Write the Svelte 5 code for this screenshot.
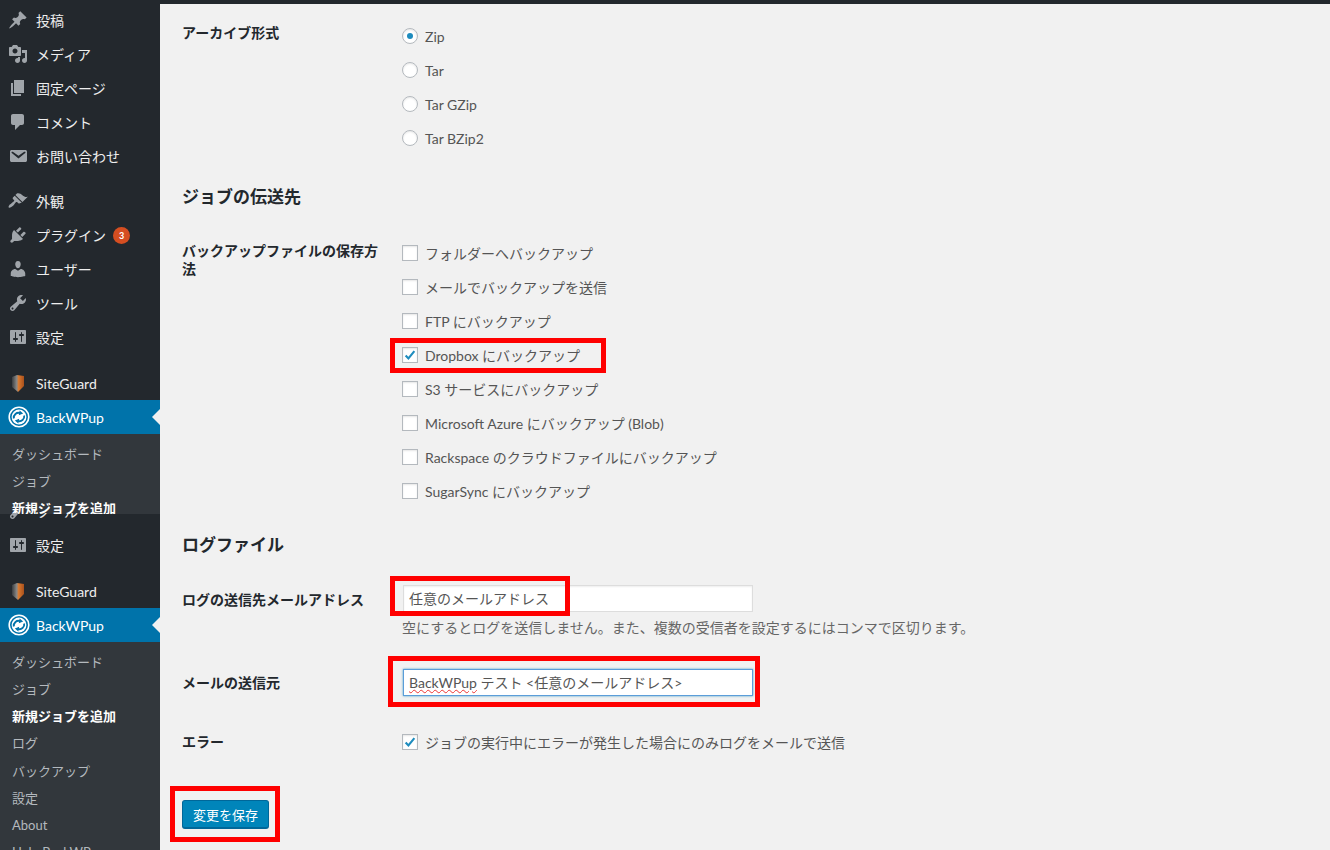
<script>
  const icons = {
    post: "M10.44 3.02l1.82-1.82 6.36 6.35-1.83 1.82c-1.05-.68-2.48-.57-3.41.36l-.75.75c-.92.93-1.04 2.35-.35 3.41l-1.83 1.82-2.41-2.41-2.8 2.79c-.42.42-3.38 2.71-3.8 2.29s1.86-3.39 2.28-3.81l2.79-2.79L4.1 9.36l1.83-1.82c1.05.69 2.48.57 3.4-.36l.75-.75c.93-.92 1.05-2.35.36-3.41z",
    media: "M13 11V4c0-.55-.45-1-1-1h-1.67L9 1H5L3.67 3H2c-.55 0-1 .45-1 1v7c0 .55.45 1 1 1h10c.55 0 1-.45 1-1zM7 4.5c1.38 0 2.5 1.12 2.5 2.5S8.38 9.5 7 9.5 4.5 8.38 4.5 7 5.62 4.5 7 4.5zM14 6h5v10.5c0 1.38-1.12 2.5-2.5 2.5S14 17.88 14 16.5s1.12-2.5 2.5-2.5c.17 0 .34.02.5.05V9h-3V6zm-4 8.05V13h2v3.5c0 1.38-1.12 2.5-2.5 2.5S7 17.88 7 16.5 8.12 14 9.5 14c.17 0 .34.02.5.05z",
    page: "M6 15V2h10v13H6zm-1 1h8v2H3V5h2v11z",
    comment: "M5 2h9c1.1 0 2 .9 2 2v7c0 1.1-.9 2-2 2h-2l-5 5v-5H5c-1.1 0-2-.9-2-2V4c0-1.1.9-2 2-2z",
    mail: "M3.87 4h13.25C18.37 4 19 4.59 19 5.79v8.42c0 1.19-.63 1.79-1.88 1.79H3.87c-1.25 0-1.88-.6-1.88-1.79V5.79c0-1.2.63-1.79 1.88-1.79zm6.62 8.6l6.74-5.53c.24-.2.43-.66.13-1.07-.29-.41-.82-.42-1.17-.17l-5.7 3.86L4.8 5.83c-.35-.25-.88-.24-1.17.17-.3.41-.11.87.13 1.07z",
    brush: "M14.48 11.06L7.41 3.99l1.5-1.5c.5-.56 2.3-.47 3.51.32 1.21.8 1.43 1.28 2.91 2.1 1.18.64 2.45 1.26 4.45.85zm-.71.71L6.7 4.7 4.93 6.47c-.39.39-.39 1.02 0 1.41l1.06 1.06c.39.39.39 1.03 0 1.42-.6.6-1.43 1.11-2.21 1.69-.35.26-.7.53-1.01.84C1.43 13.23 0 15.76.73 16.5c.74.73 3.27-.7 4.61-2.04.31-.31.58-.66.84-1.01.58-.78 1.09-1.61 1.69-2.21.39-.39 1.02-.39 1.41 0l1.06 1.06c.39.39 1.02.39 1.41 0z",
    plugin: "M13.11 4.36L9.87 7.6 8 5.73l3.24-3.24c.35-.34 1.05-.2 1.56.32.52.51.66 1.21.31 1.55zm-8 1.77l.91-1.12 9.01 9.01-1.19.84c-.71.71-2.63 1.16-3.82 1.16H6.14L4.9 17.26c-.59.59-1.54.59-2.12 0-.59-.58-.59-1.53 0-2.12l1.24-1.24v-3.88c0-1.13.4-3.19 1.09-3.89zm7.26 3.97l3.24-3.24c.34-.35 1.04-.21 1.55.31.52.51.66 1.21.31 1.55l-3.24 3.25z",
    user: "M10 9.25c-2.27 0-2.73-3.44-2.73-3.44C7 4.02 7.82 2 9.97 2c2.16 0 2.98 2.02 2.71 3.81 0 0-.41 3.44-2.68 3.44zm0 2.57L12.72 10c2.39 0 4.52 2.33 4.52 4.53v2.49s-3.65 1.13-7.24 1.13c-3.65 0-7.24-1.13-7.24-1.13v-2.49c0-2.25 1.94-4.48 4.47-4.48z",
    tool: "M16.68 9.77c-1.34 1.34-3.3 1.67-4.95.99l-5.41 6.52c-.99.99-2.59.99-3.58 0s-.99-2.59 0-3.57l6.52-5.42c-.68-1.65-.35-3.61.99-4.95 1.28-1.28 3.12-1.62 4.72-1.06l-2.89 2.89 2.82 2.82 2.86-2.87c.53 1.58.18 3.39-1.08 4.65zM3.81 16.21c.4.39 1.04.39 1.43 0 .4-.4.4-1.04 0-1.43-.39-.4-1.03-.4-1.43 0-.39.39-.39 1.03 0 1.43z",
    settings: "M18 16V4c0-.55-.45-1-1-1H3c-.55 0-1 .45-1 1v12c0 .55.45 1 1 1h14c.55 0 1-.45 1-1zM8 11h1c.55 0 1 .45 1 1s-.45 1-1 1H8v1.5c0 .28-.22.5-.5.5s-.5-.22-.5-.5V13H6c-.55 0-1-.45-1-1s.45-1 1-1h1V5.5c0-.28.22-.5.5-.5s.5.22.5.5V11zm5-2h-1c-.55 0-1-.45-1-1s.45-1 1-1h1V5.5c0-.28.22-.5.5-.5s.5.22.5.5V7h1c.55 0 1 .45 1 1s-.45 1-1 1h-1v5.5c0 .28-.22.5-.5.5s-.5-.22-.5-.5V9z"
  };

  const topGroup = [
    { icon: "post", label: "投稿" },
    { icon: "media", label: "メディア" },
    { icon: "page", label: "固定ページ" },
    { icon: "comment", label: "コメント" },
    { icon: "mail", label: "お問い合わせ" }
  ];
  const midGroup = [
    { icon: "brush", label: "外観" },
    { icon: "plugin", label: "プラグイン", badge: 3 },
    { icon: "user", label: "ユーザー" },
    { icon: "tool", label: "ツール" },
    { icon: "settings", label: "設定" }
  ];
  const submenu = ["ダッシュボード", "ジョブ", "新規ジョブを追加", "ログ", "バックアップ", "設定", "About", "Help BackWPup"];

  const formats = ["Zip", "Tar", "Tar GZip", "Tar BZip2"];
  const destinations = [
    "フォルダーへバックアップ",
    "メールでバックアップを送信",
    "FTP にバックアップ",
    "Dropbox にバックアップ",
    "S3 サービスにバックアップ",
    "Microsoft Azure にバックアップ (Blob)",
    "Rackspace のクラウドファイルにバックアップ",
    "SugarSync にバックアップ"
  ];
</script>

{#snippet row(item)}
  <div class="menu-row">
    <svg class="menu-icon" viewBox="0 0 20 20"><path d={icons[item.icon]} /></svg>
    <span>{item.label}</span>
    {#if item.badge}<span class="badge">{item.badge}</span>{/if}
  </div>
{/snippet}

{#snippet plugins(id)}
  <div class="menu-row siteguard">
    <svg class="menu-icon" viewBox="0 0 20 20">
      <defs>
        <linearGradient id="shield-{id}" x1="0" x2="1" y1="0" y2="0">
          <stop offset="0" stop-color="#3a3d40" />
          <stop offset="0.4" stop-color="#8a8a88" />
          <stop offset="0.55" stop-color="#d9792f" />
          <stop offset="1" stop-color="#a8501c" />
        </linearGradient>
      </defs>
      <path d="M4 4 L9 2 L16 3 L16 13 L10 19 L4 14 Z" fill="url(#shield-{id})" />
    </svg>
    <span>SiteGuard</span>
  </div>
  <div class="menu-row active">
    <svg class="menu-icon" viewBox="0 0 22 22">
      <circle cx="11" cy="11" r="9.8" fill="none" stroke="#fff" stroke-width="1.6" />
      <circle cx="11" cy="11" r="7.4" fill="#fff" />
      <path d="M5.8 12.5c-.6-3.8 3-6.6 6.2-5.4" fill="none" stroke="#0073aa" stroke-width="1.9" />
      <path d="M16.2 9.5c.6 3.8-3 6.6-6.2 5.4" fill="none" stroke="#0073aa" stroke-width="1.9" />
      <path d="M11.6 4.6 L15.2 7.6 L10.8 9.2 Z M10.4 17.4 L6.8 14.4 L11.2 12.8 Z" fill="#0073aa" />
    </svg>
    <span>BackWPup</span>
    <i class="caret"></i>
  </div>
{/snippet}

<div class="page">
  <aside class="sidebar">
    <div class="segment first">
      {#each topGroup as item}{@render row(item)}{/each}
      <div class="sep"></div>
      {#each midGroup as item}{@render row(item)}{/each}
      <div class="sep wide"></div>
      {@render plugins("a")}
      <ul class="submenu">
        {#each submenu.slice(0, 3) as entry, i}
          <li class:current={i === 2}>{entry}</li>
        {/each}
      </ul>
    </div>
    <div class="segment second">
      {@render row(midGroup[3])}
      {@render row(midGroup[4])}
      <div class="sep wide"></div>
      {@render plugins("b")}
      <ul class="submenu">
        {#each submenu as entry, i}
          <li class:current={i === 2}>{entry}</li>
        {/each}
      </ul>
    </div>
  </aside>

  <main class="content">
    <div class="form-row formats">
      <div class="label">アーカイブ形式</div>
      <div class="options">
        {#each formats as format, i}
          <div class="option">
            <span class="radio" class:on={i === 0}></span>
            <span>{format}</span>
          </div>
        {/each}
      </div>
    </div>

    <h3 class="dest-title">ジョブの伝送先</h3>
    <div class="form-row">
      <div class="label two-line">バックアップファイルの保存方法</div>
      <div class="options">
        {#each destinations as dest, i}
          <div class="option" class:boxed={i === 3}>
            <span class="check" class:on={i === 3}>
              {#if i === 3}
                <svg viewBox="0 0 16 16"><path d="M3 8.5 L6.2 12 L13 3.5" /></svg>
              {/if}
            </span>
            <span>{dest}</span>
            {#if i === 3}<i class="mark dropbox"></i>{/if}
          </div>
        {/each}
      </div>
    </div>

    <h3 class="log-title">ログファイル</h3>
    <div class="form-row log-to">
      <div class="label middle">ログの送信先メールアドレス</div>
      <div class="field">
        <div class="input">
          任意のメールアドレス
          <i class="mark address"></i>
        </div>
        <p class="hint">空にするとログを送信しません。また、複数の受信者を設定するにはコンマで区切ります。</p>
      </div>
    </div>

    <div class="form-row log-from">
      <div class="label middle">メールの送信元</div>
      <div class="field">
        <div class="input focus">
          <span class="typo">BackWPup</span> テスト &lt;任意のメールアドレス&gt;
          <i class="mark sender"></i>
        </div>
      </div>
    </div>

    <div class="form-row log-error">
      <div class="label middle">エラー</div>
      <div class="option">
        <span class="check on"><svg viewBox="0 0 16 16"><path d="M3 8.5 L6.2 12 L13 3.5" /></svg></span>
        <span>ジョブの実行中にエラーが発生した場合にのみログをメールで送信</span>
      </div>
    </div>

    <div class="save-wrap">
      <button class="save">変更を保存</button>
      <i class="mark saver"></i>
    </div>
  </main>
</div>

<style>
  :global(body) {
    margin: 0;
    background: #f1f1f1;
    overflow: hidden;
  }

  .page {
    display: flex;
    height: 850px;
    overflow: hidden;
    font-family: "Lato", "Noto Sans CJK JP", sans-serif;
    font-size: 14px;
    color: #555;
    background: #f1f1f1;
  }

  .sidebar {
    width: 160px;
    flex: none;
    display: flex;
    flex-direction: column;
    background: #23282d;
    color: #eee;
  }

  .segment {
    overflow: hidden;
  }

  .first {
    height: 514px;
    flex: none;
    padding-top: 3px;
    box-sizing: border-box;
  }

  .second {
    flex: 1;
    margin-top: -1px;
  }

  .second > :global(.menu-row:first-child) {
    margin-top: -19px;
  }

  .menu-row {
    position: relative;
    display: flex;
    align-items: center;
    height: 34px;
    padding-left: 8px;
    gap: 8px;
    white-space: nowrap;
  }

  .menu-icon {
    width: 20px;
    height: 20px;
    flex: none;
    fill: #a0a5aa;
  }

  .sep {
    height: 11px;
  }

  .sep.wide {
    height: 12px;
  }

  .badge {
    width: 17px;
    height: 17px;
    margin-left: -1px;
    border-radius: 50%;
    background: #d54e21;
    color: #fff;
    font-size: 9px;
    font-weight: 700;
    line-height: 17px;
    text-align: center;
  }

  .active {
    background: #0073aa;
    color: #fff;
  }

  .active .menu-icon {
    width: 22px;
    height: 22px;
    margin-right: -2px;
  }

  .caret {
    position: absolute;
    right: 0;
    top: 9px;
    border: 8px solid transparent;
    border-right-color: #f1f1f1;
    border-left-width: 0;
  }

  .submenu {
    list-style: none;
    margin: 0;
    padding: 7px 0 7px 12px;
    background: #32373c;
    color: #b4b9be;
    font-size: 13px;
  }

  .submenu li {
    height: 27.15px;
    line-height: 27px;
    white-space: nowrap;
  }

  .submenu .current {
    color: #fff;
    font-weight: 600;
  }

  .content {
    flex: 1;
    min-width: 0;
    padding-left: 22px;
    border-top: 4px solid #23282d;
  }

  .form-row {
    display: grid;
    grid-template-columns: 220px 1fr;
    align-items: start;
  }

  .formats {
    padding-top: 15px;
  }

  .label {
    color: #23282d;
    font-weight: 600;
    line-height: 18px;
    padding-right: 16px;
  }

  .formats .label {
    margin-top: 5px;
  }

  .two-line {
    margin-top: 6px;
  }

  .label.middle {
    align-self: center;
  }

  h3 {
    margin: 0;
    color: #23282d;
    font-size: 17px;
    font-weight: 600;
    line-height: 24px;
  }

  .dest-title {
    margin-top: 30px;
    margin-bottom: 27px;
  }

  .log-title {
    margin-top: 25px;
    margin-bottom: 28px;
  }

  .option {
    position: relative;
    display: flex;
    align-items: center;
    gap: 7px;
    height: 34px;
    white-space: nowrap;
  }

  .radio,
  .check {
    width: 16px;
    height: 16px;
    flex: none;
    box-sizing: border-box;
    border: 1px solid #b4b9be;
    background: #fff;
    box-shadow: inset 0 1px 2px rgba(0, 0, 0, 0.1);
  }

  .radio {
    border-radius: 50%;
    display: flex;
    align-items: center;
    justify-content: center;
  }

  .radio.on::before {
    content: "";
    width: 6px;
    height: 6px;
    border-radius: 50%;
    background: #1e8cbe;
  }

  .check svg {
    display: block;
    width: 14px;
    height: 14px;
    fill: none;
    stroke: #1e8cbe;
    stroke-width: 2.4;
  }

  .mark {
    position: absolute;
    box-sizing: border-box;
    border: 5px solid #f00;
    pointer-events: none;
  }

  .dropbox {
    left: -12px;
    top: 0;
    width: 216px;
    height: 35px;
  }

  .field {
    width: 350px;
    margin-left: 1px;
  }

  .input {
    position: relative;
    height: 27px;
    box-sizing: border-box;
    padding-left: 5px;
    border: 1px solid #ddd;
    background: #fff;
    line-height: 25px;
    white-space: nowrap;
    box-shadow: inset 0 1px 2px rgba(0, 0, 0, 0.07);
  }

  .input.focus {
    border-color: #5b9dd9;
    box-shadow: 0 0 2px rgba(30, 140, 190, 0.8);
  }

  .typo {
    text-decoration: underline wavy #e33;
    text-decoration-thickness: 1px;
  }

  .address {
    left: -14px;
    top: -10px;
    width: 180px;
    height: 40px;
  }

  .sender {
    left: -16px;
    top: -14px;
    width: 372px;
    height: 51px;
  }

  .hint {
    margin: 7px 0 0 -1px;
    color: #666;
    font-size: 14px;
    line-height: 18px;
    white-space: nowrap;
  }

  .log-to {
    align-items: start;
  }

  .log-to .label.middle {
    align-self: start;
    margin-top: 6px;
  }

  .log-from {
    margin-top: 32px;
  }

  .log-error {
    margin-top: 29px;
  }

  .save-wrap {
    position: relative;
    width: fit-content;
    margin-top: 41px;
  }

  .save {
    display: block;
    width: 87px;
    height: 29px;
    padding: 0;
    border: 1px solid #006799;
    border-bottom-width: 2px;
    border-radius: 3px;
    background: #0085ba;
    color: #fff;
    font: inherit;
    font-size: 13px;
  }

  .saver {
    left: -12px;
    top: -14px;
    width: 110px;
    height: 56px;
  }
</style>
